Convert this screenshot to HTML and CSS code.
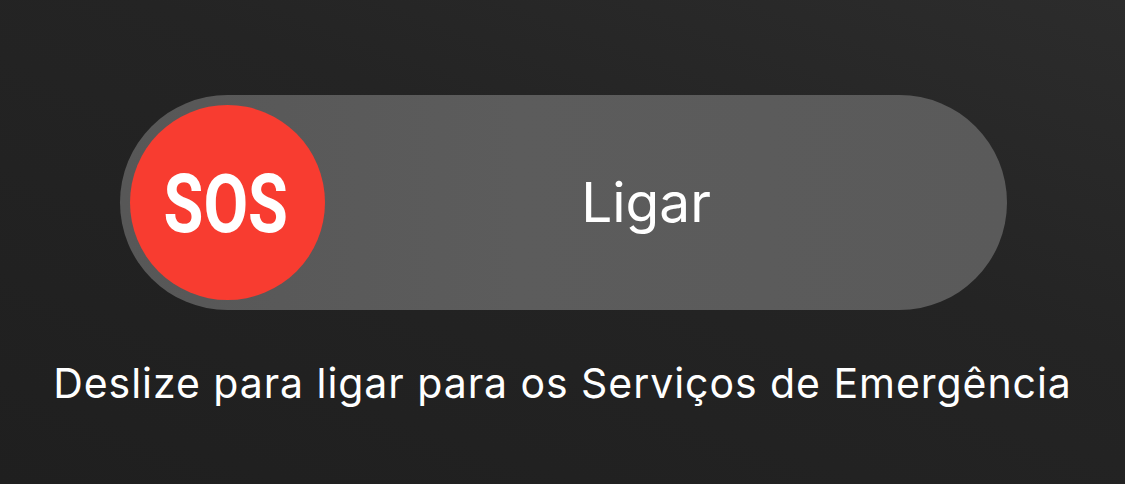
FILE: index.html
```html
<!DOCTYPE html>
<html lang="pt">
<head>
<meta charset="utf-8">
<title>SOS</title>
<link rel="stylesheet" href="styles.css">
</head>
<body>
<main class="screen">
  <div class="slider">
    <div class="knob"><span class="sos">SOS</span></div>
    <div class="label">Ligar</div>
  </div>
  <p class="hint">Deslize para ligar para os Serviços de Emergência</p>
</main>
</body>
</html>
```

FILE: styles.css
```css
html, body {
  margin: 0;
  padding: 0;
}
body {
  width: 1125px;
  height: 484px;
  overflow: hidden;
  background: linear-gradient(200deg, #2c2c2c 0%, #242424 40%, #1f1f1f 100%);
  font-family: "Inter", "Noto Sans", sans-serif;
  color: #ffffff;
}
.screen {
  display: flex;
  flex-direction: column;
  align-items: center;
  padding-top: 95px;
}
.slider {
  width: 887px;
  height: 215px;
  box-sizing: border-box;
  padding: 10px;
  border-radius: 108px;
  background: linear-gradient(90deg, #575757 0%, #5c5c5c 45%, #5a5a5a 100%);
  display: flex;
  align-items: center;
  margin-left: 2px;
}
.knob {
  width: 195px;
  height: 195px;
  border-radius: 50%;
  background: #f83c30;
  display: flex;
  align-items: center;
  justify-content: center;
  flex: none;
}
.sos {
  font-family: "Roboto", "Liberation Sans", sans-serif;
  font-weight: 700;
  font-size: 82px;
  line-height: 1;
  color: #ffffff;
  display: inline-block;
  transform: scaleX(0.79);
  margin: 2px 0 0 -3px;
}
.label {
  flex: 1;
  text-align: center;
  font-size: 55px;
  font-weight: 400;
  line-height: 1;
  padding-right: 30px;
}
.hint {
  margin: 53px 0 0 0;
  font-size: 41px;
  letter-spacing: 0.95px;
  line-height: 1;
  font-weight: 400;
  text-align: center;
}
```
